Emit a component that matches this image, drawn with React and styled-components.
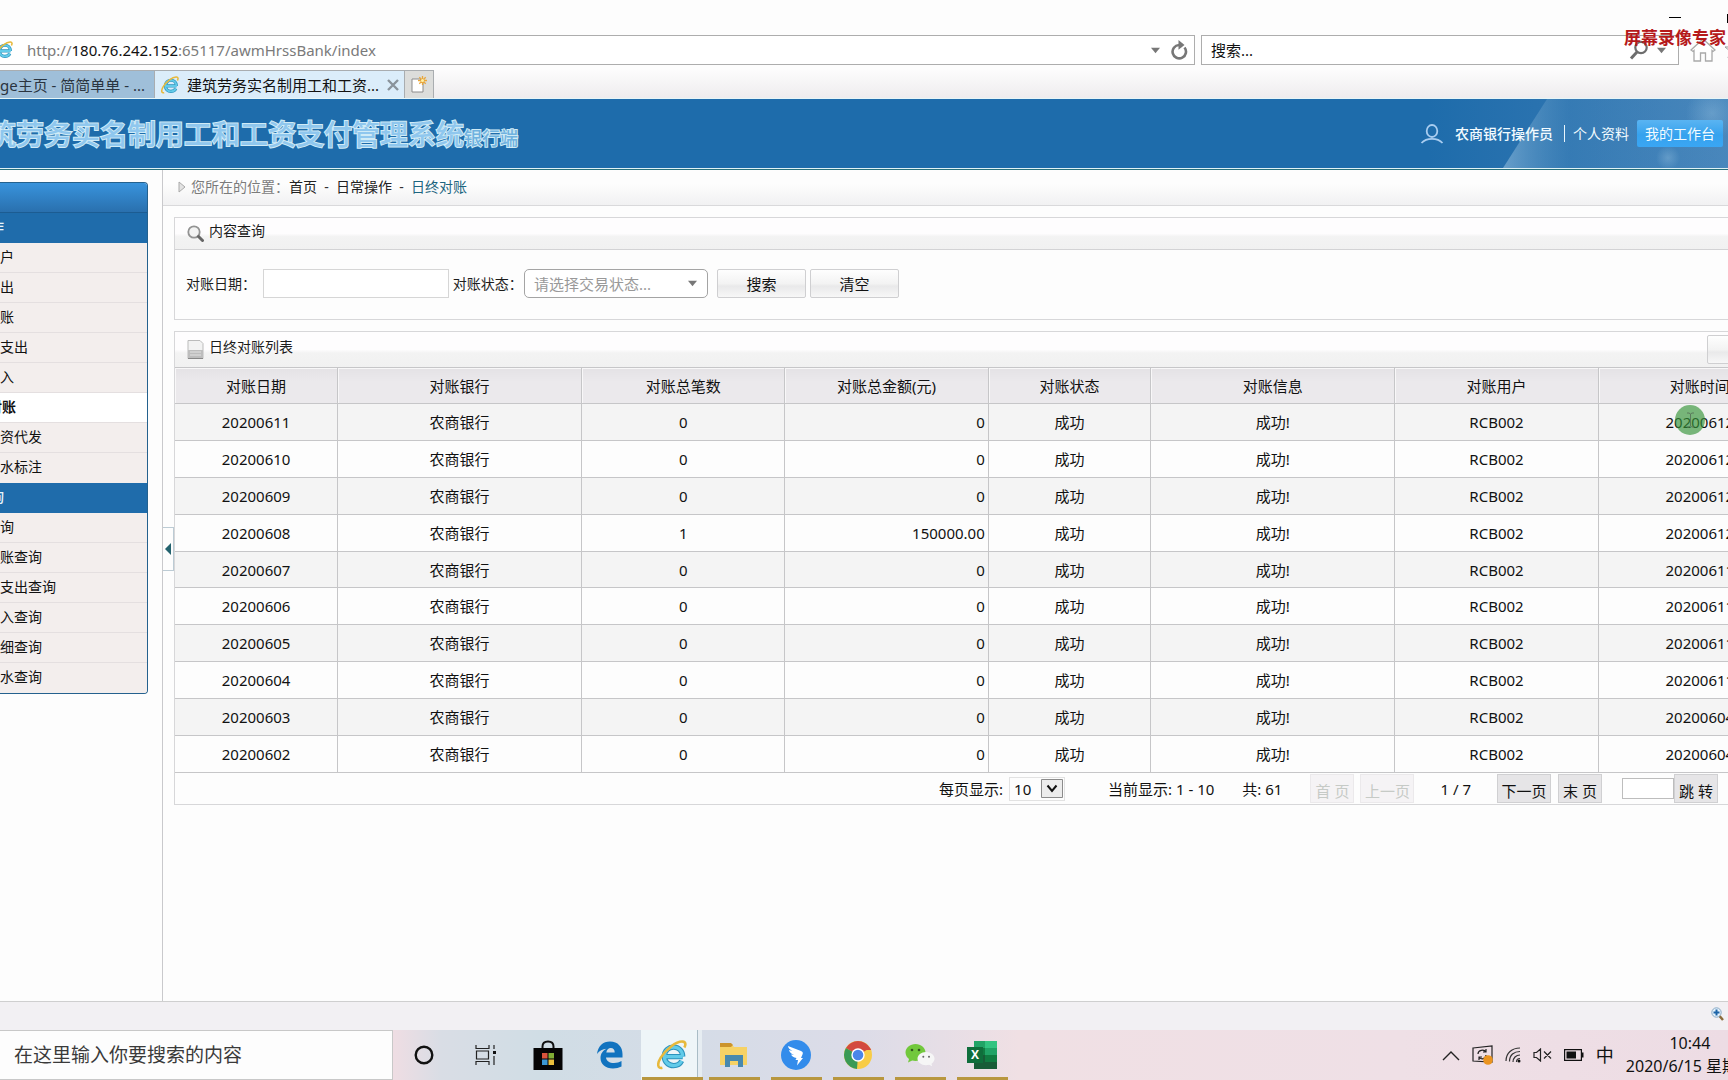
import React, { useState } from 'react';
import styled, { createGlobalStyle } from 'styled-components';

const menu = [
  { title: '作', items: ['户', '出', '账', '支出', '入', '对账', '资代发', '水标注'], active: '对账' },
  { title: '询', items: ['询', '账查询', '支出查询', '入查询', '细查询', '水查询'] },
];

const columns = [
  { label: '对账日期', width: '10%' },
  { label: '对账银行', width: '15%' },
  { label: '对账总笔数', width: '12.5%' },
  { label: '对账总金额(元)', width: '12.5%' },
  { label: '对账状态', width: '10%' },
  { label: '对账信息', width: '15%' },
  { label: '对账用户', width: '12.5%' },
  { label: '对账时间', width: '12.5%' },
];

const records = [
  { date: '20200611', count: '0', amount: '0', time: '20200612' },
  { date: '20200610', count: '0', amount: '0', time: '20200612' },
  { date: '20200609', count: '0', amount: '0', time: '20200612' },
  { date: '20200608', count: '1', amount: '150000.00', time: '20200612' },
  { date: '20200607', count: '0', amount: '0', time: '20200611' },
  { date: '20200606', count: '0', amount: '0', time: '20200611' },
  { date: '20200605', count: '0', amount: '0', time: '20200611' },
  { date: '20200604', count: '0', amount: '0', time: '20200611' },
  { date: '20200603', count: '0', amount: '0', time: '20200604' },
  { date: '20200602', count: '0', amount: '0', time: '20200604' },
];

const GlobalStyle = createGlobalStyle`
  * {
    box-sizing: border-box;
  }
  body {
    margin: 0;
    overflow: hidden;
    background: #fdfdfd;
    color: #1c1c1c;
    font-family: "Noto Sans", "Noto Sans CJK SC", sans-serif;
    font-size: 14px;
    line-height: 20px;
  }
  button, input, select {
    font: inherit;
    color: inherit;
    margin: 0;
  }
  a {
    color: inherit;
    text-decoration: none;
  }
  svg {
    display: block;
    flex: none;
  }
`;

const Screen = styled.div`
  display: flex;
  flex-direction: column;
  height: 100vh;
  overflow: hidden;
  white-space: nowrap;
`;

/* browser chrome */

const BrowserTop = styled.div`
  position: relative;
  background: linear-gradient(#fdfdfd 70%, #eeecee);
  border-bottom: 1px solid #e6f6f8;
`;

const WindowButtons = styled.div`
  display: flex;
  justify-content: flex-end;
  gap: 46px;
  height: 35px;
  padding-top: 13px;
`;

const WindowButton = styled.button`
  display: block;
  height: 12px;
  padding: 0;
  border: 0;
  background: none;
`;

const AddressRow = styled.div`
  display: flex;
  align-items: center;
  gap: 6px;
  padding-bottom: 5px;
`;

const AddressBar = styled.div`
  display: flex;
  flex: 1;
  align-items: center;
  height: 30px;
  border: 1px solid #adadad;
  border-left: 0;
  padding-right: 6px;
  gap: 10px;
  background: #fff;
`;

const AddressInput = styled.div`
  flex: 1;
  padding-left: 4px;
  color: #7a7a7a;
  font-size: 15px;

  b {
    color: #111;
    font-weight: 400;
  }
`;

const SearchBar = styled.div`
  display: flex;
  align-items: center;
  gap: 8px;
  width: 478px;
  height: 30px;
  border: 1px solid #adadad;
  padding: 0 12px 0 9px;
  background: #fff;
`;

const BrowserInput = styled.input`
  flex: 1;
  min-width: 0;
  border: 0;
  padding: 0;
  background: none;
  font-size: 15px;

  &::placeholder {
    color: #111;
  }
`;

const IconButton = styled.button`
  display: flex;
  align-items: center;
  justify-content: center;
  padding: 0;
  border: 0;
  background: none;
`;

const BrowserTools = styled.div`
  display: flex;
  align-items: center;
  gap: 8px;
  width: 43px;
  padding-left: 5px;
  overflow: hidden;
`;

const Watermark = styled.div`
  position: absolute;
  top: 26px;
  right: 2px;
  color: #b5191b;
  font-size: 17px;
  font-weight: 700;
  line-height: 24px;
`;

const Tabs = styled.div`
  display: flex;
  height: 28px;
`;

const Tab = styled.div`
  display: flex;
  align-items: center;
  gap: 8px;
  width: ${({ $width }) => $width}px;
  border-top: 1px solid #a9adb0;
  border-right: 1px solid #a9adb0;
  padding: 0 ${({ $active }) => ($active ? '6px' : '0')};
  background: ${({ $active }) => ($active ? '#dbedfa' : '#9fbfd9')};
  color: ${({ $active }) => ($active ? '#111' : '#2a3440')};
  font-size: 15px;

  span {
    flex: 1;
  }
`;

const NewTab = styled.button`
  display: flex;
  align-items: center;
  justify-content: center;
  width: 29px;
  border: 1px solid #a9adb0;
  border-left: 0;
  border-bottom: 0;
  padding: 0;
  background: #dcdddb;
`;

/* site header */

const Header = styled.header`
  position: relative;
  display: flex;
  align-items: center;
  justify-content: space-between;
  flex: none;
  height: 71px;
  padding: 0 5px 0 0;
  background: #1e6cab;
  box-shadow: inset 0 -1px 0 #28707c, inset 0 -2px 0 #e0f3f6;
`;

const HeaderArt = styled.svg`
  position: absolute;
  top: 0;
  right: 0;
  height: 69px;
`;

const SystemTitle = styled.h1`
  position: relative;
  margin: 0 0 0 -12px;
  padding-top: 3px;
  color: #8fc7ee;
  font-size: 28px;
  font-weight: 500;
  line-height: 40px;
  paint-order: stroke;
  -webkit-text-stroke: 2px #d0ebf6;

  small {
    color: #6fb2df;
    font-size: 18px;
    font-weight: 500;
  }
`;

const UserNav = styled.nav`
  position: relative;
  display: flex;
  align-items: center;
  padding-bottom: 2px;
  color: #f2fbff;
`;

const UserName = styled.strong`
  margin: 0 11px;
  font-weight: 500;
`;

const ProfileLink = styled.a`
  border-left: 1px solid #e9f5fc;
  padding: 0 8px;
  line-height: 17px;
`;

const DeskButton = styled.button`
  height: 27px;
  border: 0;
  border-radius: 2px;
  padding: 0 8px;
  background: linear-gradient(#5ab4f2, #36a2ee 55%, #3aa6f4);
`;

/* page body */

const PageBody = styled.div`
  display: flex;
  flex: 1;
  min-height: 0;
`;

const Sidebar = styled.aside`
  flex: none;
  width: 163px;
  border-right: 1px solid #c9c9cc;
  padding: 12px 14px 0 0;
`;

const Menu = styled.nav`
  border: 1px solid #24618e;
  border-left: 0;
  border-radius: 0 4px 4px 0;
  background: #f3eeed;
  overflow: hidden;
`;

const MenuTop = styled.div`
  height: 30px;
  border-bottom: 1px solid #1c5c92;
  background: linear-gradient(#3893dc, #2a70ae);
`;

const MenuTitle = styled.h2`
  height: 30px;
  margin: 0;
  background: #1f6cab;
  color: #e9f6fc;
  font-size: 14px;
  font-weight: 500;
  line-height: 28px;
  text-indent: -10px;
`;

const MenuLink = styled.a`
  display: block;
  height: 30px;
  border-bottom: 1px solid #e4dfe0;
  background: ${({ $active }) => ($active ? '#fff' : '#f3eeed')};
  color: #111;
  font-weight: ${({ $active }) => ($active ? 700 : 400)};
  line-height: 28px;
  text-indent: ${({ $active }) => ($active ? '-12px' : '0')};

  &:last-child {
    border-bottom-color: transparent;
  }
`;

const Main = styled.main`
  position: relative;
  flex: 1;
  min-width: 0;
`;

const Breadcrumb = styled.nav`
  display: flex;
  align-items: center;
  height: 36px;
  border-bottom: 1px solid #d9d9db;
  padding: 0 0 2px 15px;
  background: linear-gradient(#fdfdfd 40%, #f1f1f2);
  color: #7b7b7b;

  svg {
    margin-right: 5px;
  }
  a {
    color: #222;
  }
  a:last-child {
    color: #1c6580;
  }
  i {
    width: 19px;
    color: #333;
    font-style: normal;
    text-align: center;
  }
`;

const CollapseHandle = styled.button`
  position: absolute;
  top: 357px;
  left: 0;
  display: flex;
  align-items: center;
  width: 11px;
  height: 44px;
  border: 1px solid #bccbd4;
  border-left: 0;
  padding: 0 0 0 2px;
  background: #fdfdfd;
`;

/* the page is wider than the window, so the panels run past its right edge */
const Panels = styled.div`
  display: flex;
  flex-direction: column;
  gap: 11px;
  margin-right: -75px;
  padding: 11px 0 0 11px;
`;

const Panel = styled.section`
  border: 1px solid #d7d7d9;
  background: #fdfdfd;
`;

const PanelHeader = styled.div`
  display: flex;
  align-items: center;
  justify-content: space-between;
  height: ${({ $tall }) => ($tall ? 35 : 32)}px;
  border-bottom: ${({ $tall }) => ($tall ? '0' : '1px solid #d3d3d5')};
  padding: 0 6px 0 12px;
  background: linear-gradient(#fefdfe 50%, #f3f3f3 60%, #f1f1f1);
`;

const PanelTitle = styled.h3`
  display: flex;
  align-items: center;
  gap: 5px;
  margin: 0;
  padding-bottom: 5px;
  font-size: 14px;
  font-weight: 400;
  line-height: 20px;

  svg {
    margin-top: 4px;
  }
`;

const SearchForm = styled.form`
  display: flex;
  align-items: center;
  height: 69px;
  padding: 0 11px 2px;
`;

const FieldLabel = styled.label`
  width: ${({ $width }) => $width}px;
`;

const TextInput = styled.input`
  width: ${({ $width }) => $width}px;
  height: ${({ $height }) => $height}px;
  border: 1px solid ${({ $color }) => $color || '#d6d6d6'};
  padding: 0 6px;
  background: #fff;
`;

const SelectWrap = styled.span`
  position: relative;
  display: inline-flex;
  align-items: center;

  svg {
    position: absolute;
    right: ${({ $inset }) => $inset}px;
    pointer-events: none;
  }
`;

const StatusSelect = styled.select`
  width: 184px;
  height: 29px;
  border: 1px solid #a4a4a4;
  border-radius: 5px;
  padding: 0 9px;
  appearance: none;
  background: #fff;
  color: #999;
  font-size: 15px;
`;

const FormButton = styled.button`
  width: 89px;
  height: 29px;
  border: 1px solid #cfcfd1;
  border-radius: 2px;
  margin-left: ${({ $gap }) => $gap}px;
  padding: 0;
  background: linear-gradient(#fefefe, #f3f3f3 50%, #e9e9ea 60%, #f7f7f7);
  color: #111;
  font-size: 15px;
`;

const DataTable = styled.table`
  width: 100%;
  height: 406px;
  border-collapse: collapse;
  table-layout: fixed;
  color: #111;
  font-size: 15px;

  th,
  td {
    height: 36px;
    border: 1px solid #c6c6c8;
    padding: 0 3px;
    text-align: center;
  }
  th:first-child,
  td:first-child {
    border-left: 0;
  }
  th {
    background: linear-gradient(#e4e2e5, #ebe9ec 40%);
    box-shadow: inset 1px 1px 0 #f8f7f8;
    font-weight: 400;
  }
  td:nth-child(4) {
    text-align: right;
  }
  tbody tr:nth-child(odd) {
    background: #f4f4f4;
  }
`;

const Pager = styled.div`
  display: flex;
  align-items: center;
  justify-content: flex-end;
  height: 31px;
  padding-right: 84px;
  color: #111;
  font-size: 15px;
`;

const PagerText = styled.span`
  margin-right: ${({ $gap }) => $gap}px;
`;

const PageSizeSelect = styled.select`
  width: 56px;
  height: 24px;
  border: 1px solid #e2e2e2;
  padding: 0 4px;
  appearance: none;
  background: #fdfdfd;
`;

const PagerButton = styled.button`
  width: ${({ $wide }) => ($wide ? 54 : 44)}px;
  height: 29px;
  border: 1px solid #d0d0d2;
  margin-right: ${({ $gap }) => $gap || 0}px;
  padding: 4px 0 0;
  background: #e6e5e7;

  &:disabled {
    border-color: #ebe9eb;
    background: #f5f3f5;
    color: #c6cac6;
  }
`;

const StatusBar = styled.footer`
  display: flex;
  align-items: center;
  justify-content: flex-end;
  flex: none;
  height: 29px;
  border-top: 1px solid #cfcfcf;
  padding: 0 4px 4px 0;
  background: #f2f0f3;
`;

/* windows taskbar */

const Taskbar = styled.div`
  display: flex;
  flex: none;
  height: 50px;
  background: linear-gradient(90deg, #efdde3 393px, #d9dde5 440px, #d0dde5 540px, #d5dce7 700px, #dcdce8 860px, #f0e0e4 1020px, #efe0e6 1400px, #eddce4);
`;

const TaskSearch = styled.input`
  width: 393px;
  border: 1px solid #c8c8c8;
  border-left: 0;
  padding: 0 14px;
  background: #fdfdfd;
  font-size: 19px;

  &::placeholder {
    color: #3a3a3a;
  }
`;

const TaskButton = styled.button`
  position: relative;
  display: flex;
  align-items: center;
  justify-content: center;
  width: 62px;
  border: 0;
  padding: 0;
  background: ${({ $active }) =>
    $active ? 'linear-gradient(90deg, #eef5f8 56px, #a9bcc6 56px, #a9bcc6 57px, #e6edf2 57px, #e6edf2 61px, transparent 61px)' : 'none'};

  &::after {
    content: '';
    position: absolute;
    bottom: 0;
    width: ${({ $active }) => ($active ? 61 : 51)}px;
    height: 3px;
    background: ${({ $open }) => ($open ? '#b8973f' : 'transparent')};
  }
`;

const Tray = styled.div`
  display: flex;
  align-items: center;
  gap: 12px;
  margin-left: auto;
  margin-right: -26px;
  color: #111;
`;

const InputMode = styled.span`
  font-size: 18px;
`;

const Clock = styled.div`
  font-size: 16px;
  line-height: 23px;
  text-align: center;
`;

const CursorSpot = styled.div`
  position: absolute;
  top: 405px;
  right: 23px;
  display: flex;
  align-items: center;
  justify-content: center;
  width: 30px;
  height: 30px;
  border-radius: 50%;
  background: rgba(52, 148, 56, 0.65);
`;

const IeIcon = ({ size = 18 }) => (
  <svg width={size} height={size} viewBox="0 0 28 28" fill="none">
    <path d="M24 15.5H8.5M23 19.5c-1.4 2.8-4.2 4.4-7.5 4.4-5 0-8.6-3.6-8.6-8.6S10.700 6.600 15.500 6.600s8.500 3.700 8.500 8.900" stroke="#2d93bd" strokeWidth="5" />
    <path d="M24 15.5H8.500M23 19.500c-1.400 2.800-4.200 4.400-7.500 4.400-5 0-8.600-3.600-8.600-8.600S10.700 6.600 15.500 6.600s8.500 3.700 8.500 8.900" stroke="#62cbe9" strokeWidth="3" />
    <path d="M5 26C1 27-.5 23 3.500 16.500 8 9 18 1 24 1.500c3 .3 3 3 1.500 5.500" stroke="#e7b93c" strokeWidth="2.400" />
  </svg>
);

const Triangle = ({ size = 9, color = '#777' }) => (
  <svg width={size} height={size} viewBox="0 0 10 10">
    <path d="M0 2h10L5 8z" fill={color} />
  </svg>
);

const RefreshIcon = () => (
  <svg width="18" height="20" viewBox="0 0 18 20" fill="none">
    <path d="M14.500 7.500A6.700 6.700 0 1 1 9 5" stroke="#777" strokeWidth="2.600" />
    <path d="M8.500 0l6 5-6 4.800z" fill="#777" />
  </svg>
);

const FindIcon = () => (
  <svg width="20" height="20" viewBox="0 0 20 20" fill="none" stroke="#6d6d6d">
    <circle cx="12" cy="7.500" r="5.700" strokeWidth="2.200" />
    <path d="M8 12l-6 6.500" strokeWidth="3" />
  </svg>
);

const HomeIcon = () => (
  <svg width="26" height="24" viewBox="0 0 26 24" fill="#fff" stroke="#a9a9a9" strokeWidth="1.300">
    <path d="M1 12L13 1l12 11-2 1.500-1-1V23h-6.500v-8h-5v8H4V12.500l-1 1z" />
  </svg>
);

const StarIcon = () => (
  <svg width="20" height="20" viewBox="0 0 20 20" fill="#fff" stroke="#999">
    <path d="M10 1l2.700 6h6.300l-5 4 2 7-6-4-6 4 2-7-5-4h6.300z" />
  </svg>
);

const NewTabIcon = () => (
  <svg width="16" height="18" viewBox="0 0 16 18">
    <path d="M1 3h8l3 3v10H1z" fill="#fff" stroke="#8b8b8b" />
    <path d="M11.500 0v9M7 4.500h9M8.300 1.300l6.400 6.400M14.700 1.300L8.300 7.700" stroke="#e9a73c" strokeWidth="1.300" />
    <circle cx="11.500" cy="4.500" r="1.500" fill="#fff2a8" />
  </svg>
);

const UserIcon = () => (
  <svg width="24" height="20" viewBox="0 0 24 20" fill="none" stroke="#a9cdf0" strokeWidth="1.800">
    <ellipse cx="12" cy="7" rx="5.300" ry="6" />
    <path d="M1.500 19c5-5.500 16-5.500 21 0" />
  </svg>
);

const PanelSearchIcon = () => (
  <svg width="17" height="17" viewBox="0 0 17 17" fill="none">
    <circle cx="7" cy="7" r="5.700" fill="#f3f3f3" stroke="#939393" strokeWidth="1.800" />
    <path d="M11.500 11.500l4 4" stroke="#666" strokeWidth="3" strokeLinecap="round" />
  </svg>
);

const ListIcon = () => (
  <svg width="17" height="19" viewBox="0 0 17 19">
    <path d="M1 .5h12l3 3v15H1z" fill="#f2f2f2" stroke="#bbb" />
    <path d="M1 10h15v8.500H1z" fill="#bdbdbd" />
    <path d="M3 12h11M3 15h11" stroke="#e3e3e3" />
    <path d="M1 18.500h15" stroke="#888" />
  </svg>
);

const ZoomIcon = () => (
  <svg width="13" height="14" viewBox="0 0 13 14" fill="none">
    <path d="M8.500 9l3.500 4" stroke="#8b6c3c" strokeWidth="2.500" />
    <circle cx="5.500" cy="5.500" r="4.700" fill="#e4f1fb" stroke="#88a8c4" />
    <path d="M5.500 2.500v6M2.500 5.500h6" stroke="#1c64a8" strokeWidth="2" />
  </svg>
);

const CortanaIcon = () => (
  <svg width="20" height="20" viewBox="0 0 20 20">
    <circle cx="10" cy="10" r="8.300" fill="none" stroke="#111" strokeWidth="2.400" />
  </svg>
);

const TaskViewIcon = () => (
  <svg width="22" height="20" viewBox="0 0 22 20" fill="none" stroke="#222" strokeWidth="1.200">
    <path d="M1 0v3.500h13V0M1 20v-3.500h13V20M1.500 6h12v8h-12zM19 0v4M19 11v9" />
    <path d="M18 6h3v3h-3z" fill="#111" stroke="none" />
  </svg>
);

const StoreIcon = () => (
  <svg width="30" height="30" viewBox="0 0 30 30">
    <path d="M9.500 9V6.500C9.500 3 12 1.500 15 1.500s5.500 1.500 5.500 5V9" fill="none" stroke="#111" strokeWidth="2" />
    <path d="M.5 8h29v22H.5z" fill="#050505" />
    <path d="M9 13h5.500v5.500H9z" fill="#d7543c" />
    <path d="M15.500 13H21v5.500h-5.500z" fill="#80ad35" />
    <path d="M9 19.500h5.500V25H9z" fill="#3b98d4" />
    <path d="M15.500 19.500H21V25h-5.500z" fill="#e9bf3c" />
  </svg>
);

const EdgeIcon = () => (
  <svg width="26" height="28" viewBox="0 0 26 28">
    <path d="M0 13C1 5 6 .5 13 .5c8 0 12.500 5.500 12.500 12.500v3.500H9c.3 3.500 3.500 5.500 8 5.500 3 0 5.500-.8 7.500-2v5.500c-2.500 1.300-5.500 2-8.500 2C8.500 27.500 3.500 23 3.500 17c0-4.500 2.500-7.500 6-9.300C5.500 8 2.500 9.500 0 13zm9.300-1.500h8.400C17.700 8.500 16.300 7 13.800 7c-2.400 0-4 1.700-4.500 4.500z" fill="#1173bf" />
  </svg>
);

const FolderIcon = () => (
  <svg width="30" height="26" viewBox="0 0 30 26">
    <path d="M1 2.500h12l2 2.500h13v18H1z" fill="#f6d265" />
    <path d="M1 1h11l2 2-2 2H1z" fill="#cc942c" />
    <path d="M6 13h18v12h-5v-6h-8v6H6z" fill="#4889ae" />
  </svg>
);

const DingIcon = () => (
  <svg width="30" height="30" viewBox="0 0 30 30">
    <circle cx="15" cy="15" r="15" fill="#338ceb" />
    <path d="M7 6l13 5c2 .8 2.200 1.800 1.500 3.500L20 18h2l-6 7.500 1-5.500h-2.500l1-2c-3-.5-4.500-1.500-5.500-3.500l3 .5c-3-1.500-4.500-2.800-5-5l3.500 1C8.500 9.500 7.300 8 7 6z" fill="#fff" />
  </svg>
);

const ChromeIcon = () => (
  <svg width="28" height="28" viewBox="0 0 28 28">
    <circle cx="14" cy="14" r="14" fill="#f8cc46" />
    <path d="M14 14L1.900 7A14 14 0 0 1 26.100 7z" fill="#d34a3f" />
    <path d="M14 14l-1 14A14 14 0 0 1 1.900 7z" fill="#3a9a55" />
    <path d="M14 7h12.100l1 2H14z" fill="#d34a3f" />
    <circle cx="14" cy="14" r="6.700" fill="#fff" />
    <circle cx="14" cy="14" r="5.300" fill="#4a86e8" />
  </svg>
);

const WechatIcon = () => (
  <svg width="30" height="24" viewBox="0 0 30 24">
    <path d="M10.500 1C16 1 20.500 4.800 20.500 9.500S16 18 10.500 18c-1.200 0-2.300-.2-3.300-.5L3 19.500l1-3.500C2 14.500.5 12 .5 9.500.5 4.800 5 1 10.500 1z" fill="#72c83c" />
    <circle cx="7" cy="7" r="1.300" fill="#31591e" />
    <circle cx="14" cy="7" r="1.300" fill="#31591e" />
    <path d="M21 9c4.800 0 8.500 3 8.500 6.700 0 2-1.200 3.800-3 5l.7 2.500-3-1.500c-1 .3-2 .5-3.200.5-4.800 0-8.500-3-8.500-6.500S16.200 9 21 9z" fill="#f6f6f6" />
    <circle cx="18.300" cy="13.700" r="1" fill="#666" />
    <circle cx="24" cy="13.700" r="1" fill="#666" />
  </svg>
);

const ExcelIcon = () => (
  <svg width="30" height="28" viewBox="0 0 30 28" fontFamily="Open Sans, sans-serif">
    <path d="M7 0h11v7H7z" fill="#22a366" />
    <path d="M18 0h12v7H18z" fill="#33c481" />
    <path d="M7 7h11v7H7z" fill="#107c41" />
    <path d="M18 7h12v7H18z" fill="#21a366" />
    <path d="M7 14h23v14H7z" fill="#185c37" />
    <path d="M18 14h12v7H18z" fill="#107c41" />
    <path d="M0 6h16v16H0z" fill="#0f6e3b" />
    <text x="8" y="18" fill="#fff" fontSize="12" fontWeight="700" textAnchor="middle">X</text>
  </svg>
);

const TrayChevron = () => (
  <svg width="18" height="11" viewBox="0 0 18 11" fill="none" stroke="#222" strokeWidth="1.400">
    <path d="M1 10l8-8 8 8" />
  </svg>
);

const SyncIcon = () => (
  <svg width="21" height="20" viewBox="0 0 21 20" fill="none" stroke="#222" strokeWidth="1.200">
    <path d="M1 3l19-2v16L1 16zM6 9c0-4 6-5 8-2M14 4v3h-3M14 10c0 4-5 5-7 2M7 15v-3h3" />
    <circle cx="16" cy="15" r="4.800" fill="#ea9420" stroke="none" />
  </svg>
);

const WifiIcon = () => (
  <svg width="16" height="16" viewBox="0 0 16 16" fill="none" stroke="#333" strokeWidth="1.200">
    <path d="M1 14C1 6 7 1 15 1M4.500 14.500C4.500 8 9 4.500 15 4.500M8 15c0-4 3-7 7-7M11.500 15c0-2 1.500-3.500 3.500-3.500" />
    <circle cx="14" cy="14" r="1.500" fill="#111" stroke="none" />
  </svg>
);

const MuteIcon = () => (
  <svg width="19" height="14" viewBox="0 0 19 14" fill="none" stroke="#222" strokeWidth="1.200">
    <path d="M1 4.500h2.500L7.500 1v12L3.500 9.500H1zM11 3.500l7 7M18 3.500l-7 7" />
  </svg>
);

const BatteryIcon = () => (
  <svg width="20" height="12" viewBox="0 0 20 12">
    <path d="M.6.6h16.800v10.800H.6z" fill="none" stroke="#111" strokeWidth="1.200" />
    <path d="M2.500 2.500h9.500v7H2.500zM18 3.500h1.500v5H18z" fill="#111" />
  </svg>
);

const tasks = [
  { name: 'Cortana', Icon: CortanaIcon },
  { name: '任务视图', Icon: TaskViewIcon },
  { name: 'Microsoft Store', Icon: StoreIcon },
  { name: 'Microsoft Edge', Icon: EdgeIcon },
  { name: 'Internet Explorer', Icon: () => <IeIcon size={30} />, open: true, active: true },
  { name: '文件资源管理器', Icon: FolderIcon, open: true },
  { name: '钉钉', Icon: DingIcon, open: true },
  { name: 'Google Chrome', Icon: ChromeIcon, open: true },
  { name: '微信', Icon: WechatIcon, open: true },
  { name: 'Excel', Icon: ExcelIcon, open: true },
];

const Browser = () => (
  <BrowserTop>
    <WindowButtons>
      <WindowButton aria-label="最小化">
        <svg width="12" height="12"><path d="M0 4h12v1H0z" fill="#000" /></svg>
      </WindowButton>
      <WindowButton aria-label="最大化">
        <svg width="1" height="12"><path d="M0 1h1v9H0z" fill="#000" /></svg>
      </WindowButton>
    </WindowButtons>
    <AddressRow>
      <AddressBar>
        <svg width="13" height="18" viewBox="5 0 13 18"><IeIcon /></svg>
        <AddressInput>http://<b>180.76.242.152</b>:65117/awmHrssBank/index</AddressInput>
        <IconButton aria-label="地址列表"><Triangle /></IconButton>
        <IconButton aria-label="刷新"><RefreshIcon /></IconButton>
      </AddressBar>
      <SearchBar>
        <BrowserInput aria-label="搜索" placeholder="搜索..." />
        <IconButton aria-label="搜索"><FindIcon /></IconButton>
        <IconButton aria-label="搜索选项"><Triangle /></IconButton>
      </SearchBar>
      <BrowserTools>
        <IconButton aria-label="主页"><HomeIcon /></IconButton>
        <IconButton aria-label="收藏夹"><StarIcon /></IconButton>
      </BrowserTools>
    </AddressRow>
    <Tabs>
      <Tab $width={155}>ge主页 - 简简单单 - ...</Tab>
      <Tab $width={250} $active>
        <IeIcon />
        <span>建筑劳务实名制用工和工资...</span>
        <IconButton aria-label="关闭标签页">
          <svg width="12" height="12" viewBox="0 0 12 12"><path d="M1 1l10 10M11 1L1 11" stroke="#8a939b" strokeWidth="2.400" /></svg>
        </IconButton>
      </Tab>
      <NewTab aria-label="新建标签页"><NewTabIcon /></NewTab>
    </Tabs>
    <Watermark>屏幕录像专家</Watermark>
  </BrowserTop>
);

const SiteHeader = () => (
  <Header>
    <HeaderArt width="300" viewBox="0 0 300 68" preserveAspectRatio="none">
      <defs>
        <linearGradient id="haze" x1="0" x2="1">
          <stop offset="0" stopColor="#4a84bb" stopOpacity="0" />
          <stop offset="1" stopColor="#4a84bb" stopOpacity=".7" />
        </linearGradient>
        <linearGradient id="beam" x1="0" x2="1">
          <stop offset="0" stopColor="#a9cde6" stopOpacity=".5" />
          <stop offset=".3" stopColor="#5a96c4" stopOpacity=".2" />
          <stop offset="1" stopColor="#6ea5cd" stopOpacity=".25" />
        </linearGradient>
        <radialGradient id="glow">
          <stop offset="0" stopColor="#9fc8e4" stopOpacity=".35" />
          <stop offset="1" stopColor="#9fc8e4" stopOpacity="0" />
        </radialGradient>
      </defs>
      <path d="M0 0h300v68H0z" fill="url(#haze)" />
      <path d="M119 0h181v68H75z" fill="url(#beam)" />
      <circle cx="284" cy="14" r="26" fill="url(#glow)" />
      <circle cx="240" cy="58" r="12" fill="url(#glow)" />
    </HeaderArt>
    <SystemTitle>筑劳务实名制用工和工资支付管理系统<small>银行端</small></SystemTitle>
    <UserNav>
      <UserIcon />
      <UserName>农商银行操作员</UserName>
      <ProfileLink href="#profile">个人资料</ProfileLink>
      <DeskButton>我的工作台</DeskButton>
    </UserNav>
  </Header>
);

const SideMenu = () => (
  <Sidebar>
    <Menu>
      <MenuTop />
      {menu.map((group) => (
        <div key={group.title}>
          <MenuTitle>{group.title}</MenuTitle>
          {group.items.map((item) => (
            <MenuLink key={item} href="#menu" $active={item === group.active}>{item}</MenuLink>
          ))}
        </div>
      ))}
    </Menu>
  </Sidebar>
);

const SearchPanel = () => {
  const [date, setDate] = useState('');

  return (
    <Panel>
      <PanelHeader>
        <PanelTitle><PanelSearchIcon />内容查询</PanelTitle>
      </PanelHeader>
      <SearchForm onSubmit={(e) => e.preventDefault()}>
        <FieldLabel htmlFor="date" $width={77}>对账日期：</FieldLabel>
        <TextInput id="date" $width={186} $height={29} value={date} onChange={(e) => setDate(e.target.value)} />
        <FieldLabel htmlFor="status" $width={75}>&nbsp;对账状态：</FieldLabel>
        <SelectWrap $inset={11}>
          <StatusSelect id="status" defaultValue="">
            <option value="">请选择交易状态...</option>
            <option value="1">成功</option>
          </StatusSelect>
          <Triangle />
        </SelectWrap>
        <FormButton type="submit" $gap={9}>搜索</FormButton>
        <FormButton type="reset" $gap={4} onClick={() => setDate('')}>清空</FormButton>
      </SearchForm>
    </Panel>
  );
};

const ListPanel = () => (
  <Panel>
    <PanelHeader $tall>
      <PanelTitle><ListIcon />日终对账列表</PanelTitle>
      <FormButton $gap={0} aria-label="导出" />
    </PanelHeader>
    <DataTable>
      <colgroup>
        {columns.map((col) => <col key={col.label} style={{ width: col.width }} />)}
      </colgroup>
      <thead>
        <tr>{columns.map((col) => <th key={col.label}>{col.label}</th>)}</tr>
      </thead>
      <tbody>
        {records.map((row) => (
          <tr key={row.date}>
            <td>{row.date}</td>
            <td>农商银行</td>
            <td>{row.count}</td>
            <td>{row.amount}</td>
            <td>成功</td>
            <td>成功!</td>
            <td>RCB002</td>
            <td>{row.time}</td>
          </tr>
        ))}
      </tbody>
    </DataTable>
    <Pager>
      <PagerText as="label" htmlFor="size" $gap={6}>每页显示:</PagerText>
      <PagerText $gap={43}>
        <SelectWrap $inset={2}>
          <PageSizeSelect id="size" defaultValue="10">
            <option>10</option>
            <option>20</option>
          </PageSizeSelect>
          <svg width="22" height="19" viewBox="0 0 22 19" fill="none">
            <path d="M.5.5h21v18H.5z" fill="#ececec" stroke="#8b8b8b" />
            <path d="M6.500 6.500L11 12l4.500-5.500" stroke="#111" strokeWidth="2" />
          </svg>
        </SelectWrap>
      </PagerText>
      <PagerText $gap={28}>当前显示: 1 - 10</PagerText>
      <PagerText $gap={28}>共: 61</PagerText>
      <PagerButton disabled $gap={6}>首 页</PagerButton>
      <PagerButton disabled $wide $gap={26}>上一页</PagerButton>
      <PagerText $gap={26}>1 / 7</PagerText>
      <PagerButton $wide $gap={7}>下一页</PagerButton>
      <PagerButton $gap={20}>末 页</PagerButton>
      <TextInput aria-label="页码" $width={52} $height={21} $color="#bdbdbd" />
      <PagerButton>跳 转</PagerButton>
    </Pager>
  </Panel>
);

const WindowsTaskbar = () => (
  <Taskbar>
    <TaskSearch aria-label="搜索" placeholder="在这里输入你要搜索的内容" />
    {tasks.map(({ name, Icon, open, active }) => (
      <TaskButton key={name} aria-label={name} $open={open} $active={active}><Icon /></TaskButton>
    ))}
    <Tray>
      <TrayChevron />
      <SyncIcon />
      <WifiIcon />
      <MuteIcon />
      <BatteryIcon />
      <InputMode>中</InputMode>
      <Clock>10:44<br />2020/6/15 星期一</Clock>
    </Tray>
  </Taskbar>
);

const App = () => (
  <Screen>
    <GlobalStyle />
    <Browser />
    <SiteHeader />
    <PageBody>
      <SideMenu />
      <Main>
        <Breadcrumb>
          <svg width="8" height="12" viewBox="0 0 8 12"><path d="M1 1l6 5-6 5z" fill="#e3e3e3" stroke="#aaa" /></svg>
          您所在的位置：
          <a href="#home">首页</a><i>-</i>
          <a href="#daily">日常操作</a><i>-</i>
          <a href="#check">日终对账</a>
        </Breadcrumb>
        <Panels>
          <SearchPanel />
          <ListPanel />
        </Panels>
        <CollapseHandle aria-label="收起菜单">
          <svg width="6" height="12" viewBox="0 0 6 12"><path d="M6 0v12L0 6z" fill="#23626e" /></svg>
        </CollapseHandle>
      </Main>
    </PageBody>
    <StatusBar><ZoomIcon /></StatusBar>
    <WindowsTaskbar />
    <CursorSpot>
      <svg width="9" height="16" viewBox="0 0 9 16" fill="none"><path d="M1 1h2l1.500 1L6 1h2M4.500 2v12M1 15h2l1.500-1L6 15h2" stroke="#5a7a5c" /></svg>
    </CursorSpot>
  </Screen>
);

export default App;
